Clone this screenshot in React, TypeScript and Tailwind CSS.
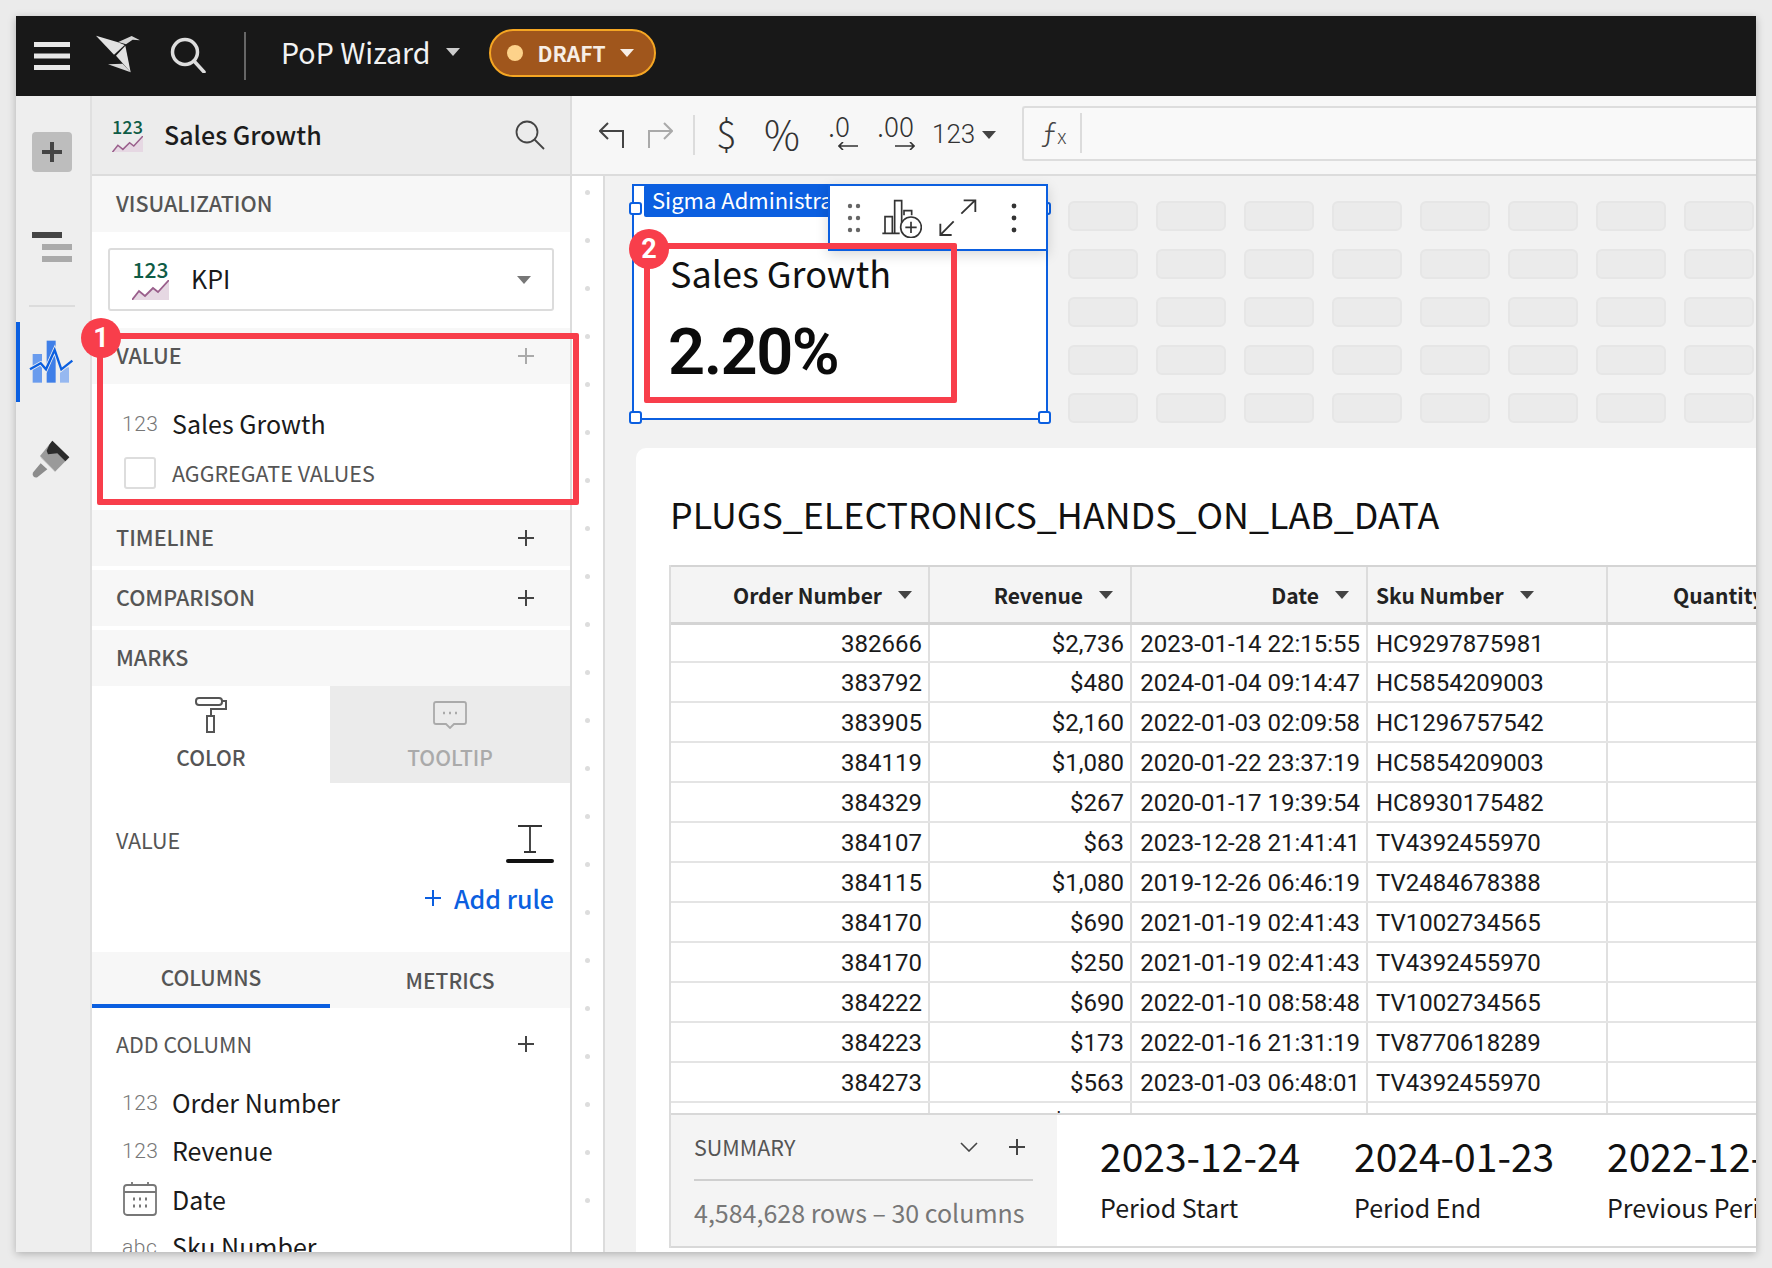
import React from 'react';

const rows = [
  ['382666', '$2,736', '2023-01-14 22:15:55', 'HC9297875981'],
  ['383792', '$480', '2024-01-04 09:14:47', 'HC5854209003'],
  ['383905', '$2,160', '2022-01-03 02:09:58', 'HC1296757542'],
  ['384119', '$1,080', '2020-01-22 23:37:19', 'HC5854209003'],
  ['384329', '$267', '2020-01-17 19:39:54', 'HC8930175482'],
  ['384107', '$63', '2023-12-28 21:41:41', 'TV4392455970'],
  ['384115', '$1,080', '2019-12-26 06:46:19', 'TV2484678388'],
  ['384170', '$690', '2021-01-19 02:41:43', 'TV1002734565'],
  ['384170', '$250', '2021-01-19 02:41:43', 'TV4392455970'],
  ['384222', '$690', '2022-01-10 08:58:48', 'TV1002734565'],
  ['384223', '$173', '2022-01-16 21:31:19', 'TV8770618289'],
  ['384273', '$563', '2023-01-03 06:48:01', 'TV4392455970'],
  ['', '$1,080', '', ''],
];

const Caret = ({ className = '' }: { className?: string }) => (
  <svg viewBox="0 0 14 8" className={`w-[14px] h-[8px] shrink-0 ${className}`} fill="currentColor">
    <path d="M0 0h14L7 8z" />
  </svg>
);

const Plus = ({ className = '' }: { className?: string }) => (
  <svg viewBox="0 0 18 18" className={`w-[18px] h-[18px] shrink-0 ${className}`} stroke="currentColor" strokeWidth="2" fill="none">
    <path d="M9 1v16M1 9h16" />
  </svg>
);

const KpiIcon = ({ big }: { big?: boolean }) => (
  <div className={`flex flex-col items-center shrink-0 ${big ? 'w-[37px]' : 'w-[31px]'}`}>
    <span className={`font-medium text-[#0f5c46] ${big ? 'text-[21px] leading-[20px]' : 'text-[18px] leading-[17px]'}`}>123</span>
    <svg viewBox="0 0 37 20" className="w-full mt-[1px]">
      <path d="M0 20 L7 11 L13 16 L21 8 L26 12 L37 0 V20 Z" fill="#e6d8e3" />
      <path d="M0 20 L7 11 L13 16 L21 8 L26 12 L37 0" fill="none" stroke="#9a5f8c" strokeWidth="1.8" />
    </svg>
  </div>
);

const Section = ({ label, plus, faint }: { label: string; plus?: boolean; faint?: boolean }) => (
  <div className="h-14 shrink-0 bg-[#f7f7f7] flex items-center justify-between pl-6 pr-[35px]">
    <span className="text-[21.5px] leading-6 font-medium text-[#555555] -mt-[2px]">{label}</span>
    {plus && <Plus className={faint ? 'text-[#aaaaaa]' : 'text-[#444444]'} />}
  </div>
);

const ColumnRow = ({ type, label }: { type: string; label: string }) => (
  <div className="h-12 shrink-0 flex items-center pl-[30px]">
    <span className="w-[50px] font-['Roboto',sans-serif] font-light text-[21px] text-[#777777] leading-6 tracking-[0.5px]">{type}</span>
    <span className="text-[25px] leading-8 text-[#1a1a1a] -mt-[2px]">{label}</span>
  </div>
);

const Badge = ({ n, className }: { n: number; className: string }) => (
  <div className={`absolute w-10 h-10 rounded-full bg-[#f83e4b] text-white text-[27px] font-bold leading-none flex items-center justify-center font-['Roboto',sans-serif] ${className}`}>
    {n}
  </div>
);

const Handle = ({ className }: { className: string }) => (
  <div className={`absolute w-[13px] h-[13px] rounded-[3px] bg-white border-2 border-[#0b5fe0] ${className}`} />
);

const Cell = ({ w, right, children }: { w: string; right?: boolean; children: React.ReactNode }) => (
  <div className={`${w} shrink-0 h-full pt-[2px] border-r-2 border-[#e0e0e0] flex items-center overflow-hidden ${right ? 'justify-end pr-[6px]' : 'pl-[8px]'}`}>
    {children}
  </div>
);

const HeadCell = ({ w, label, right, pr }: { w: string; label: string; right?: boolean; pr?: string }) => (
  <div className={`${w} shrink-0 h-full border-r-2 border-[#dcdcdc] flex items-center gap-[16px] ${right ? 'justify-end' : 'pl-[8px]'} ${pr ?? ''}`}>
    <span className="text-[21px] leading-7 font-semibold text-[#222222] whitespace-nowrap">{label}</span>
    <Caret className="text-[#444444]" />
  </div>
);

const Stat = ({ value, label, w }: { value: string; label: string; w: string }) => (
  <div className={`${w} shrink-0 flex flex-col`}>
    <span className="text-[39px] leading-[52px] text-[#111111] whitespace-nowrap">{value}</span>
    <span className="text-[25px] leading-[38px] mt-[7px] text-[#1a1a1a] whitespace-nowrap">{label}</span>
  </div>
);

export default function App() {
  return (
    <div className="w-[1772px] h-[1268px] bg-[#ebebeb] pt-4 pl-4 overflow-hidden font-['Noto_Sans_CJK_SC',sans-serif]">
      <div className="w-[1740px] h-[1236px] flex flex-col overflow-hidden bg-white shadow-[0_2px_8px_rgba(0,0,0,0.25)]">
        {/* top bar */}
        <div className="h-20 shrink-0 bg-[#181818] flex items-center pl-[18px] text-white">
          <svg viewBox="0 0 36 28" className="w-9 h-7 shrink-0 text-[#e8e8e8]" fill="currentColor">
            <rect width="36" height="5" />
            <rect y="11.5" width="36" height="5" />
            <rect y="23" width="36" height="5" />
          </svg>
          <svg viewBox="0 0 180 165" className="w-[60px] h-[55px] ml-[20px] mb-[3px] shrink-0">
            <path d="M18 26 L84 46 L104 54 L72 83 Z" fill="#e2e2e2" />
            <path d="M85 45 L125 27 L150 40 L128 38 L108 52 Z" fill="#d4d4d4" />
            <path d="M106 56 L122 136 L78 86 Z" fill="#e2e2e2" />
            <path d="M54 112 L98 110 L122 136 Z" fill="#d8d8d8" />
          </svg>
          <svg viewBox="0 0 36 36" className="w-9 h-9 ml-[20px] mb-[2px] shrink-0" fill="none" stroke="#dddddd" strokeWidth="3.5">
            <circle cx="15" cy="15" r="12.5" />
            <path d="M24 24 L34 35" strokeLinecap="round" />
          </svg>
          <div className="w-[2px] h-12 bg-[#666666] ml-[38px] shrink-0" />
          <span className="ml-[35px] mb-[8px] text-[28.6px] leading-9 text-[#f2f2f2] whitespace-nowrap">PoP Wizard</span>
          <Caret className="ml-[15px] mb-[8px] text-[#cccccc]" />
          <div className="ml-[29px] mb-[7px] w-[167px] h-12 rounded-full bg-[#a0561c] border-2 border-[#f5a623] flex items-center pl-4">
            <div className="w-4 h-4 rounded-full bg-[#fdd28a]" />
            <span className="ml-[15px] text-[21px] leading-7 font-semibold text-[#f7eee6]">DRAFT</span>
            <Caret className="ml-[14px] text-[#f7eee6]" />
          </div>
        </div>

        <div className="flex-1 flex min-h-0">
          {/* icon rail */}
          <div className="w-[76px] shrink-0 bg-[#eeeeee] border-r-2 border-[#e0e0e0] flex flex-col items-center pr-[3px] relative">
            <div className="mt-9 w-10 h-10 rounded-[4px] bg-[#bdbdbd] flex items-center justify-center">
              <svg viewBox="0 0 20 20" className="w-5 h-5" stroke="#444444" strokeWidth="4" fill="none"><path d="M10 0v20M0 10h20" /></svg>
            </div>
            <svg viewBox="0 0 40 30" className="w-10 h-[30px] mt-[60px]">
              <rect width="30" height="6" fill="#444444" />
              <rect x="10" y="12" width="30" height="6" fill="#aaaaaa" />
              <rect x="10" y="24" width="30" height="6" fill="#aaaaaa" />
            </svg>
            <div className="w-[46px] h-[2px] bg-[#dcdcdc] mt-[43px]" />
            <div className="absolute left-0 top-[226px] w-1 h-20 bg-[#0b5fe0]" />
            <svg viewBox="0 0 180 180" className="w-[60px] h-[60px] mt-[23px] -ml-[3px] shrink-0">
              <rect x="38" y="72" width="28" height="86" fill="#6a9cee" />
              <rect x="80" y="32" width="27" height="126" fill="#3f7fe8" />
              <rect x="120" y="112" width="27" height="46" fill="#96b8f0" />
              <path d="M30 118 L62 100 L78 118 L104 60 L124 118 L157 92" fill="none" stroke="#eeeeee" strokeWidth="12" />
              <path d="M30 118 L62 100 L78 118 L104 60 L124 118 L157 92" fill="none" stroke="#0b5fe0" strokeWidth="7" />
            </svg>
            <svg viewBox="0 0 180 180" className="w-[60px] h-[60px] mt-10 -ml-[3px] shrink-0">
              <path d="M62 100 L82 118 L52 142 Q42 145 38 135 Q37 128 42 124 Z" fill="#8c8c8c" />
              <path d="M60 78 L97 32 L148 82 L105 125 Z" fill="#9a9a9a" />
              <path d="M97 32 L148 82 L136 94 L112 70 L84 73 L80 62 L88 44 Z" fill="#2b2b2b" />
              <path d="M62 82 L104 122" stroke="#b8b8b8" strokeWidth="2" fill="none" />
            </svg>
          </div>

          {/* properties panel */}
          <div className="w-[480px] shrink-0 border-r-2 border-[#dcdcdc] flex flex-col relative z-10 bg-white">
            <div className="h-20 shrink-0 bg-[#ececec] border-b-2 border-[#dcdcdc] flex items-center pl-5 pr-[25px]">
              <KpiIcon />
              <span className="ml-[21px] -mt-[2px] text-[25px] leading-8 font-medium text-[#1c1c1c]">Sales Growth</span>
              <svg viewBox="0 0 30 30" className="w-[30px] h-[30px] ml-auto" fill="none" stroke="#444444" strokeWidth="1.8">
                <circle cx="12" cy="12" r="10.5" />
                <path d="M19 19 L29 29" />
              </svg>
            </div>
            <Section label="VISUALIZATION" />
            <div className="mt-4 mb-[17px] ml-4 mr-[16px] h-[63px] shrink-0 border-2 border-[#dcdcdc] rounded-[3px] flex items-center pl-[22px] pr-[21px]">
              <KpiIcon big />
              <span className="ml-[22px] -mt-[3px] text-[25px] leading-8 text-[#1a1a1a]">KPI</span>
              <Caret className="ml-auto text-[#777777]" />
            </div>
            <Section label="VALUE" plus faint />
            <div className="pt-4 pb-3 shrink-0">
              <ColumnRow type="123" label="Sales Growth" />
              <div className="h-[50px] flex items-center pl-8">
                <div className="w-8 h-8 border-2 border-[#dddddd] rounded-[3px]" />
                <span className="ml-[16px] text-[21.5px] leading-7 text-[#555555]">AGGREGATE VALUES</span>
              </div>
            </div>
            <Section label="TIMELINE" plus />
            <div className="h-1 shrink-0" />
            <Section label="COMPARISON" plus />
            <div className="h-1 shrink-0" />
            <Section label="MARKS" />
            <div className="h-[97px] shrink-0 flex">
              <div className="w-[238px] flex flex-col items-center pt-[11px]">
                <svg viewBox="0 0 32 36" className="w-8 h-9" fill="none" stroke="#555555" strokeWidth="2">
                  <rect x="1" y="1" width="26" height="7" rx="3" />
                  <path d="M27 4 H31 V12 H16 V18" />
                  <rect x="12" y="19" width="7" height="16" />
                </svg>
                <span className="mt-[12px] text-[21px] leading-6 font-medium text-[#555555]">COLOR</span>
              </div>
              <div className="flex-1 bg-[#ebebeb] flex flex-col items-center pt-[15px]">
                <svg viewBox="0 0 34 28" className="w-[34px] h-7" fill="none" stroke="#aaaaaa" strokeWidth="1.8">
                  <path d="M3 1 H31 Q33 1 33 3 V21 Q33 23 31 23 H21 L17 27 L13 23 H3 Q1 23 1 21 V3 Q1 1 3 1 Z" />
                  <path d="M10 12h2M16 12h2M22 12h2" strokeWidth="2.4" />
                </svg>
                <span className="mt-[16px] text-[21px] leading-6 font-medium text-[#aaaaaa]">TOOLTIP</span>
              </div>
            </div>
            <div className="h-[169px] shrink-0 flex flex-col pl-6 pr-4">
              <div className="mt-[41px] h-[40px] flex items-center justify-between">
                <span className="mb-[9px] text-[21.5px] leading-6 text-[#555555]">VALUE</span>
                <div className="w-12 flex flex-col items-center">
                  <svg viewBox="0 0 24 28" className="w-6 h-7" fill="none" stroke="#333333" strokeWidth="1.8">
                    <path d="M0 1h24M12 1v26M6 27h12" />
                  </svg>
                  <div className="w-12 h-1 mt-[6px] rounded-sm bg-[#111111]" />
                </div>
              </div>
              <div className="mt-[16px] h-9 flex items-center justify-end gap-3 text-[#0b5fe0]">
                <Plus />
                <span className="text-[25px] leading-8 font-medium">Add rule</span>
              </div>
            </div>
            <div className="h-14 shrink-0 bg-[#f7f7f7] flex">
              <div className="w-[238px] border-b-4 border-[#0b5fe0] flex items-center justify-center">
                <span className="text-[21px] leading-6 font-medium text-[#555555] -mt-[2px]">COLUMNS</span>
              </div>
              <div className="flex-1 flex items-center justify-center">
                <span className="text-[21px] leading-6 font-medium text-[#555555] -mt-[1px]">METRICS</span>
              </div>
            </div>
            <div className="h-10 mt-4 mb-[15px] shrink-0 flex items-center justify-between pl-6 pr-[35px]">
              <span className="text-[21.5px] leading-7 text-[#555555]">ADD COLUMN</span>
              <Plus className="text-[#444444]" />
            </div>
            <ColumnRow type="123" label="Order Number" />
            <ColumnRow type="123" label="Revenue" />
            <div className="h-12 shrink-0 flex items-center pl-[31px]">
              <svg viewBox="0 0 34 34" className="w-[34px] h-[34px] shrink-0 mr-[15px]" fill="none" stroke="#777777" strokeWidth="1.8">
                <rect x="1" y="3" width="32" height="30" rx="3" />
                <path d="M1 10h32M9 0v4M25 0v4" />
                <path d="M10 17h2M16 17h2M22 17h2M10 24h2M16 24h2M22 24h2" strokeWidth="3" />
              </svg>
              <span className="text-[25px] leading-8 text-[#1a1a1a] -mt-[1px]">Date</span>
            </div>
            <ColumnRow type="abc" label="Sku Number" />

            {/* annotation 1 */}
            <div className="absolute left-[5px] top-[237px] w-[482px] h-[172px] border-[6px] border-[#f83e4b] rounded-[2px]" />
            <Badge n={1} className="left-[-11px] top-[222px]" />
          </div>

          {/* workbook */}
          <div className="flex-1 min-w-0 flex flex-col">
            <div className="h-20 shrink-0 bg-[#f7f7f7] border-b-2 border-[#dcdcdc] flex items-center pl-[27px]">
              <svg viewBox="0 0 25 26" className="w-[25px] h-[26px] shrink-0" fill="none" stroke="#444444" strokeWidth="2">
                <path d="M9 1 L1 9 L9 17M1 9 H24 V26" />
              </svg>
              <svg viewBox="0 0 25 26" className="w-[25px] h-[26px] shrink-0 ml-[24px]" fill="none" stroke="#aaaaaa" strokeWidth="2">
                <path d="M16 1 L24 9 L16 17M24 9 H1 V26" />
              </svg>
              <div className="w-[2px] h-10 bg-[#dcdcdc] ml-[20px] shrink-0" />
              <span className="ml-[21px] w-[48px] text-[38px] leading-10 font-light text-[#333333] -mt-[5px]">$</span>
              <span className="w-[64px] text-[40px] leading-10 font-light text-[#333333] -mt-[5px]">%</span>
              <div className="w-[49px] flex flex-col items-start text-[#333333] -mt-[4px]">
                <span className="text-[28px] leading-[24px] font-light -mt-[3px]">.0</span>
                <svg viewBox="0 0 20 8" className="w-5 h-2 ml-[10px] mt-[5px]" fill="none" stroke="currentColor" strokeWidth="1.6"><path d="M20 4H1M5 0L1 4L5 8" /></svg>
              </div>
              <div className="w-[55px] flex flex-col items-start text-[#333333] -mt-[4px]">
                <span className="text-[28px] leading-[24px] font-light -mt-[3px]">.00</span>
                <svg viewBox="0 0 20 8" className="w-5 h-2 ml-[18px] mt-[5px]" fill="none" stroke="currentColor" strokeWidth="1.6"><path d="M0 4H19M15 0L19 4L15 8" /></svg>
              </div>
              <span className="font-['Roboto',sans-serif] font-light text-[26px] leading-8 text-[#333333] -mt-[3px]">123</span>
              <Caret className="ml-[7px] text-[#444444] -mt-[1px]" />
              <div className="ml-[26px] flex-1 h-[55px] mt-[-4px] bg-[#f9f9f9] border-2 border-r-0 border-[#dddddd] rounded-l-[3px] flex items-center pl-[17px]">
                <span className="w-[39px] text-[30px] leading-8 font-light text-[#444444]">ƒ<span className="text-[20px]">x</span></span>
                <div className="w-[2px] h-10 bg-[#dcdcdc]" />
              </div>
            </div>

            <div className="flex-1 min-h-0 flex">
              <div className="w-[33px] shrink-0 bg-white border-r-2 border-[#dcdcdc] flex flex-col items-center gap-[43px] pt-[14px] overflow-hidden">
                {Array.from({ length: 22 }).map((_, i) => (
                  <div key={i} className="w-[5px] h-[5px] shrink-0 rounded-full bg-[#dddddd]" />
                ))}
              </div>

              <div className="flex-1 min-w-0 bg-[#f2f2f2] flex flex-col pt-[8px] overflow-hidden">
                <div className="h-[264px] shrink-0 flex items-start pl-[27px]">
                  {/* selected KPI widget */}
                  <div className="w-[416px] h-[236px] shrink-0 bg-white border-2 border-[#0b5fe0] relative">
                    <div className="absolute left-[10px] top-[-1px] w-[190px] h-[32px] bg-[#0b5fe0] rounded-[2px] pl-2 pb-[4px] flex items-center overflow-hidden text-white text-[22px] leading-7 whitespace-nowrap">
                      Sigma Administrator
                    </div>
                    <div className="pl-[36px] pt-[59px] flex flex-col">
                      <span className="text-[36px] leading-[56px] text-[#111111] whitespace-nowrap -mt-[1px]">Sales Growth</span>
                      <span className="mt-[16px] -ml-[2px] font-['Roboto',sans-serif] font-semibold text-[65px] leading-[72px] tracking-[-1.5px] text-[#0b0b0b]">2.20%</span>
                    </div>
                    <Handle className="left-[-5px] top-[16px]" />
                    <Handle className="right-[-5px] top-[16px]" />
                    <Handle className="left-[-5px] bottom-[-6px]" />
                    <Handle className="right-[-5px] bottom-[-6px]" />
                    <div className="absolute right-[-2px] top-[-2px] w-[220px] h-[67px] bg-white border-2 border-[#0b5fe0] shadow-[0_4px_12px_rgba(0,0,0,0.15)] flex items-center pl-[17px]">
                      <svg viewBox="0 0 14 30" className="w-[14px] h-[30px] shrink-0" fill="#666666">
                        <circle cx="3" cy="3" r="2.2" /><circle cx="11" cy="3" r="2.2" />
                        <circle cx="3" cy="15" r="2.2" /><circle cx="11" cy="15" r="2.2" />
                        <circle cx="3" cy="27" r="2.2" /><circle cx="11" cy="27" r="2.2" />
                      </svg>
                      <svg viewBox="120 24 126 120" className="w-[42px] h-10 ml-[19px] shrink-0" fill="none" stroke="#333333" strokeWidth="5">
                        <path d="M127 130h52M135 130V80h22v50M164 130V32h21v74M192 76V62h23v14" />
                        <circle cx="213" cy="112" r="31" fill="#ffffff" />
                        <path d="M213 95v34M196 112h34" />
                      </svg>
                      <svg viewBox="295 25 120 117" className="w-10 h-[39px] ml-4 shrink-0" fill="none" stroke="#333333" strokeWidth="5.5">
                        <path d="M365 72 L406 32M372 32h35v35M342 95 L303 135M302 102v34h34" />
                      </svg>
                      <svg viewBox="0 0 6 30" className="w-[6px] h-[30px] ml-[33px] shrink-0" fill="#333333">
                        <circle cx="3" cy="3" r="2.4" /><circle cx="3" cy="15" r="2.4" /><circle cx="3" cy="27" r="2.4" />
                      </svg>
                    </div>
                    <div className="absolute left-[10px] top-[57px] w-[313px] h-[160px] border-[6px] border-[#f83e4b] rounded-[2px]" />
                    <Badge n={2} className="left-[-5px] top-[43px]" />
                  </div>
                  {/* empty layout cells */}
                  <div className="ml-[20px] mt-[17px] grid grid-cols-[repeat(8,70px)] gap-x-[18px] gap-y-[18px] shrink-0">
                    {Array.from({ length: 40 }).map((_, i) => (
                      <div key={i} className="h-[30px] rounded-[6px] bg-[#ebebeb] border-2 border-[#e6e6e6]" />
                    ))}
                  </div>
                </div>

                {/* data card */}
                <div className="flex-1 min-h-0 ml-[31px] bg-white rounded-tl-[10px] pt-[40px] flex flex-col overflow-hidden">
                  <div className="h-[50px] mb-[27px] ml-[34px] flex items-center shrink-0">
                    <span className="text-[35.8px] leading-[50px] -mt-[1px] text-[#111111] whitespace-nowrap">PLUGS_ELECTRONICS_HANDS_ON_LAB_DATA</span>
                  </div>
                  <div className="ml-[33px] w-[1087px] border-l-2 border-[#dcdcdc] flex flex-col overflow-hidden">
                    <div className="h-[60px] shrink-0 bg-[#f4f4f4] border-t-2 border-b-[3px] border-[#d4d4d4] flex">
                      <HeadCell w="w-[259px]" label="Order Number" right pr="pr-[16px]" />
                      <HeadCell w="w-[202px]" label="Revenue" right pr="pr-[17px]" />
                      <HeadCell w="w-[236px]" label="Date" right pr="pr-[17px]" />
                      <HeadCell w="w-[240px]" label="Sku Number" />
                      <div className="flex-1 flex items-center pl-[65px]">
                        <span className="text-[21px] leading-7 font-semibold text-[#222222]">Quantity</span>
                      </div>
                    </div>
                    <div className="h-[488px] shrink-0 overflow-hidden font-['Roboto',sans-serif] text-[24px] text-[#1a1a1a]">
                      {rows.map((r, i) => (
                        <div key={i} className="h-10 first:h-[38px] border-b-2 border-[#e4e4e4] flex">
                          <Cell w="w-[259px]" right>{r[0]}</Cell>
                          <Cell w="w-[202px]" right>{r[1]}</Cell>
                          <Cell w="w-[236px]" right>{r[2]}</Cell>
                          <Cell w="w-[240px]">{r[3]}</Cell>
                          <div className="flex-1" />
                        </div>
                      ))}
                    </div>
                    <div className="h-[135px] shrink-0 border-t-2 border-b-2 border-[#d8d8d8] flex">
                      <div className="w-[386px] shrink-0 bg-[#f4f4f4] pl-[23px] pr-6 flex flex-col">
                        <div className="h-[66px] shrink-0 border-b-2 border-[#cfcfcf] flex items-center">
                          <span className="text-[21.5px] leading-7 text-[#555555]">SUMMARY</span>
                          <svg viewBox="0 0 18 10" className="w-[18px] h-[10px] ml-auto" fill="none" stroke="#444444" strokeWidth="1.6"><path d="M1 1 L9 9 L17 1" /></svg>
                          <Plus className="ml-[30px] mr-[7px] text-[#444444]" />
                        </div>
                        <span className="mt-[15px] text-[25px] leading-8 text-[#777777] whitespace-nowrap">4,584,628 rows – 30 columns</span>
                      </div>
                      <div className="flex-1 flex pl-[43px] pt-[14px] overflow-hidden">
                        <Stat w="w-[254px]" value="2023-12-24" label="Period Start" />
                        <Stat w="w-[253px]" value="2024-01-23" label="Period End" />
                        <Stat w="w-[250px]" value="2022-12-24" label="Previous Period" />
                      </div>
                    </div>
                  </div>
                </div>
              </div>
            </div>
          </div>
        </div>
      </div>
    </div>
  );
}
